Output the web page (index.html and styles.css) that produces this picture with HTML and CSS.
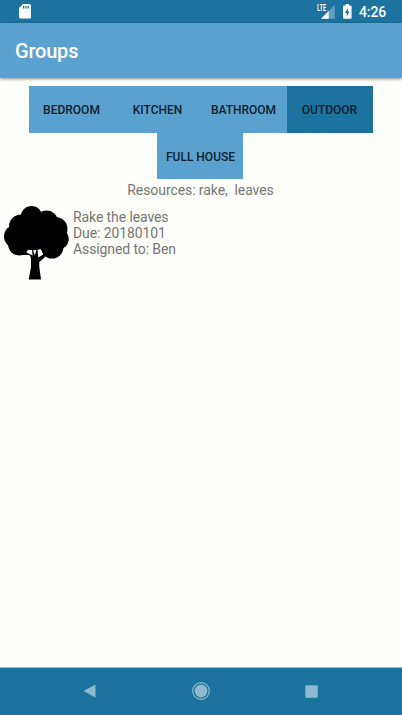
FILE: index.html
```
<!DOCTYPE html>
<html lang="en">
<head>
<meta charset="utf-8">
<title>Groups</title>
<link rel="stylesheet" href="styles.css">
</head>
<body>
<div class="screen">
  <div class="status">
    <svg class="sd" width="12" height="15" viewBox="0 0 12 15"><path fill="#fff" d="M4 0h6.500Q12 0 12 1.500v11.500Q12 14.500 10.500 14.500H1.500Q0 14.500 0 13V4z"/><path fill="#1c739f" d="M4 2h1.300v2.500H4zM6.300 2h1.300v2.500H6.300zM8.600 2h1.300v2.500H8.600z"/></svg>
    <div class="signal">
      <svg width="18" height="15" viewBox="0 0 18 15"><path fill="#619fbe" d="M17.700 1v13.700H4z"/><path fill="#1c739f" d="M4 0h7v8H4z"/><path fill="#fff" d="M11.700 7v7.700H4z"/></svg>
      <span class="lte">LTE</span>
    </div>
    <svg class="battery" width="9" height="15" viewBox="0 0 9 15"><path fill="#fff" d="M2.700 0h3.300v1.400H7.600Q8.600 1.400 8.600 2.400v11.300Q8.600 14.700 7.600 14.700H1Q0 14.700 0 13.700V2.400Q0 1.400 1 1.400h1.700z"/><path fill="#1c739f" d="M4.900 4v3.400h1.800L3.700 12.400V9H2z"/></svg>
    <span class="clock">4:26</span>
  </div>
  <header class="appbar"><h1>Groups</h1></header>
  <main>
    <div class="tabs">
      <button>BEDROOM</button><button>KITCHEN</button><button>BATHROOM</button><button class="active">OUTDOOR</button>
    </div>
    <div class="tabs second"><button>FULL HOUSE</button></div>
    <p class="resources">Resources: rake,&nbsp; leaves</p>
    <div class="task">
      <svg width="66" height="75" viewBox="0 0 66 75">
        <circle cx="27.500" cy="10.800" r="10.800"/><circle cx="42.500" cy="16" r="11.500"/><circle cx="51.500" cy="23" r="12"/><circle cx="54" cy="33" r="10.700"/><circle cx="48" cy="41" r="11.500"/><circle cx="15.500" cy="38" r="11.500"/><circle cx="11.500" cy="30.500" r="11.500"/><circle cx="17" cy="20.500" r="12"/>
        <path d="M14 14h34l8 21-9 14H15L8 30z"/>
        <path d="M18 48 24 48.500Q27 49 27 54V61L24.700 73.500H37L35.300 61V56L41 51 38 42H22z"/>
        <path fill="#fefffb" d="M22.300 46.500 24 43.800 28 44 28.700 49.500zM29 44.300 32.300 44 30.800 49.500zM33.500 43.800 37 43.300 39.200 48.500 34.300 51.500z"/>
      </svg>
      <div class="details"><div>Rake the leaves</div><div>Due: 20180101</div><div>Assigned to: Ben</div></div>
    </div>
  </main>
  <nav>
    <svg width="13" height="14" viewBox="0 0 13 14"><path fill="#8eb9cf" d="M12.500.5v13L.5 7z"/></svg>
    <svg width="18" height="18" viewBox="0 0 18 18"><circle cx="9" cy="9" r="8.300" fill="none" stroke="#8eb9cf" stroke-width="1.200"/><circle cx="9" cy="9" r="6.400" fill="#8eb9cf"/></svg>
    <svg width="13" height="13" viewBox="0 0 13 13"><rect x=".3" y=".3" width="12.400" height="12.400" rx=".8" fill="#8eb9cf"/></svg>
  </nav>
</div>
</body>
</html>
```
FILE: styles.css
```
* { box-sizing: border-box; }
body { margin: 0; font-family: Roboto, sans-serif; background: #fefffb; }
.screen { width: 402px; height: 715px; display: flex; flex-direction: column; overflow: hidden; }
.status { height: 23px; flex: none; background: #1c739f; display: flex; align-items: flex-start; padding: 4px 16px 0 19px; }
.signal { position: relative; margin-left: auto; height: 15px; }
.signal svg { display: block; }
.lte { position: absolute; left: 0; top: 0; color: #fff; font-size: 8.4px; line-height: 8px; font-weight: 700; transform: scaleX(.68); transform-origin: 0 0; }
.battery { margin-left: 8px; }
.clock { width: 27px; color: #fff; font-size: 14px; font-weight: 500; line-height: 16px; margin-left: 7px; letter-spacing: -.1px; }
.appbar { position: relative; height: 54.700px; flex: none; background: #5aa1cf; padding-left: 15px; display: flex; align-items: center; box-shadow: 0 1px 3px rgba(0,0,0,.45); }
h1 { margin: 2px 0 0; color: #fff; font-size: 20px; line-height: 24px; font-weight: 500; letter-spacing: -.2px; }
main { flex: 1; padding-top: 8px; }
.tabs { display: flex; justify-content: center; padding-right: 1px; }
.second { padding-right: 2px; }
button { width: 86px; height: 46.900px; padding: 1px 0 0; border: 0; background: #5aa1cf; color: #0e222d; font: 500 12px Roboto, sans-serif; }
.second button { padding-left: 1px; }
.active { background: #1c739f; color: #06202d; }
.resources { margin: 3px 0 0; padding-right: 1px; text-align: center; font-size: 14px; line-height: 16px; letter-spacing: -.08px; color: #757674; }
.task { display: flex; padding: 8px 0 0 4px; }
.details { margin: 3px 0 0 3px; font-size: 14px; line-height: 16px; letter-spacing: -.1px; color: #757674; }
nav { height: 48px; flex: none; background: #1c739f; border-top: 1px solid #a9bac5; display: flex; align-items: center; justify-content: space-between; padding: 0 84px 1px 83px; }
```
